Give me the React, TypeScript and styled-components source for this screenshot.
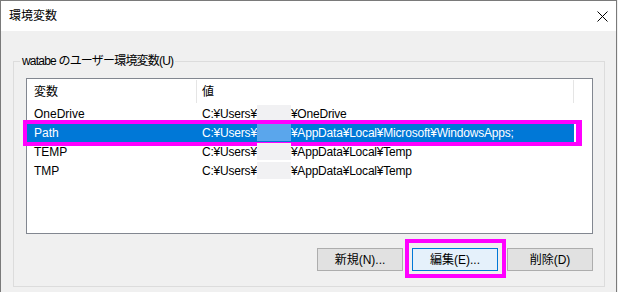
import React from 'react';
import styled, { createGlobalStyle } from 'styled-components';

const GlobalStyle = createGlobalStyle`
    body {
        margin: 0;
        background: #f0f0f0;
        font-family: "Liberation Sans", "Noto Sans CJK JP", sans-serif;
        font-size: 12px;
        color: #000;
    }
`;

const Window = styled.div`
    box-sizing: border-box;
    width: 617px;
    height: 292px;
    border: 1px solid #7a7a7a;
    border-bottom: none;
    background: #f0f0f0;
    display: flex;
    flex-direction: column;
`;

const TitleBar = styled.div`
    height: 30px;
    background: #fff;
    display: flex;
    align-items: center;
    padding: 0 8px;
    font-size: 12px;
`;

const Title = styled.span`
    flex: 1;
    line-height: 16px;
`;

const Body = styled.div`
    padding: 30px 0 0 12px;
`;

const GroupBox = styled.div`
    position: relative;
    box-sizing: border-box;
    width: 592px;
    height: 226px;
    border: 1px solid #dcdcdc;
    padding: 16px 11px 0 12px;
`;

const Legend = styled.span`
    position: absolute;
    top: -9px;
    left: 6px;
    padding: 0 2px;
    background: #f0f0f0;
    line-height: 16px;
    letter-spacing: -0.8px;
`;

const ListBox = styled.div`
    box-sizing: border-box;
    width: 567px;
    height: 156px;
    border: 1px solid #828790;
    background: #fff;
`;

const HeaderRow = styled.div`
    display: flex;
    height: 25px;
`;

const HeaderCell = styled.div<{ $w: number; $pad: number }>`
    box-sizing: border-box;
    width: ${p => p.$w}px;
    height: 23px;
    margin-top: 1px;
    padding-left: ${p => p.$pad}px;
    border-right: 1px solid #e5e5e5;
    display: flex;
    align-items: center;
    line-height: 16px;
`;

const Row = styled.div<{ $selected?: boolean }>`
    position: relative;
    display: flex;
    width: 547px;
    height: 19px;
    align-items: center;
    background: ${p => (p.$selected ? '#0078d7' : 'transparent')};
    color: ${p => (p.$selected ? '#fff' : '#000')};
`;

const Cell = styled.div<{ $w: number; $pad: number; $tight?: boolean }>`
    box-sizing: border-box;
    width: ${p => p.$w}px;
    padding-left: ${p => p.$pad}px;
    white-space: nowrap;
    line-height: 16px;
    display: flex;
    align-items: center;
    letter-spacing: ${p => (p.$tight ? '-0.2px' : 'normal')};
`;

const Blur = styled.span<{ $w: number; $selected?: boolean }>`
    display: inline-block;
    width: ${p => p.$w}px;
    height: 17px;
    background: ${p => (p.$selected ? '#5aa6ec' : '#f1f1f3')};
`;

const Highlight = styled.div<{ $inset: string; $widths: string }>`
    position: absolute;
    inset: ${p => p.$inset};
    border: solid #ff00ff;
    border-width: ${p => p.$widths};
    pointer-events: none;
`;

const ButtonBar = styled.div`
    display: flex;
    justify-content: flex-end;
    gap: 9px;
    margin-top: 14px;
    width: 567px;
`;

const Button = styled.div<{ $focused?: boolean }>`
    position: relative;
    box-sizing: border-box;
    width: 86px;
    height: 23px;
    display: flex;
    align-items: center;
    justify-content: center;
    border: 1px solid ${p => (p.$focused ? '#0078d7' : '#adadad')};
    background: ${p => (p.$focused ? '#e5f1fb' : '#e1e1e1')};
    line-height: 16px;
`;

type TVar = {
    name: string;
    head: string;
    blur: number;
    tail: string;
    selected?: boolean;
};

const vars: TVar[] = [
    { name: 'OneDrive', head: 'C:¥Users¥', blur: 34, tail: '¥OneDrive' },
    { name: 'Path', head: 'C:¥Users¥', blur: 34, tail: '¥AppData¥Local¥Microsoft¥WindowsApps;', selected: true },
    { name: 'TEMP', head: 'C:¥Users¥', blur: 34, tail: '¥AppData¥Local¥Temp' },
    { name: 'TMP', head: 'C:¥Users¥', blur: 34, tail: '¥AppData¥Local¥Temp' },
];

const CloseIcon = () => (
    <svg width='11' height='11' viewBox='0 0 11 11'>
        <path d='M0.5 0.5 L10.5 10.5 M10.5 0.5 L0.5 10.5' stroke='#000' strokeWidth='1' />
    </svg>
);

const App = () => (
    <>
        <GlobalStyle />
        <Window>
            <TitleBar>
                <Title>環境変数</Title>
                <CloseIcon />
            </TitleBar>
            <Body>
                <GroupBox>
                    <Legend>watabe のユーザー環境変数(U)</Legend>
                    <ListBox>
                        <HeaderRow>
                            <HeaderCell $w={170} $pad={7}>変数</HeaderCell>
                            <HeaderCell $w={377} $pad={5}>値</HeaderCell>
                        </HeaderRow>
                        {vars.map(v => (
                            <Row key={v.name} $selected={v.selected}>
                                <Cell $w={170} $pad={7}>{v.name}</Cell>
                                <Cell $w={377} $pad={5} $tight>
                                    {v.head}
                                    <Blur $w={v.blur} $selected={v.selected} />
                                    {v.tail}
                                </Cell>
                                {v.selected && <Highlight $inset='-3px -8px -4px -4px' $widths='4px 6px 4px 4px' />}
                            </Row>
                        ))}
                    </ListBox>
                    <ButtonBar>
                        <Button>新規(N)...</Button>
                        <Button $focused>
                            編集(E)...
                            <Highlight $inset='-10px -9px -8px -8px' $widths='4px' />
                        </Button>
                        <Button>削除(D)</Button>
                    </ButtonBar>
                </GroupBox>
            </Body>
        </Window>
    </>
);

export default App;
